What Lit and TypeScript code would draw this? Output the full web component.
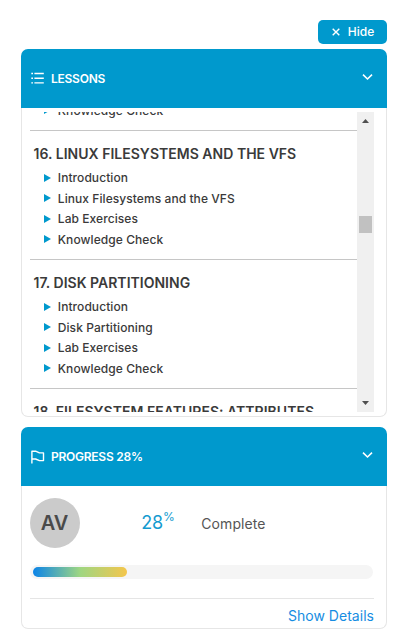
import { LitElement, html, css, svg } from "lit";
import { customElement, property } from "lit/decorators.js";

interface Lesson {
  title: string;
  items: string[];
}

const LESSONS: Lesson[] = [
  { title: "", items: ["Knowledge Check"] },
  {
    title: "16. LINUX FILESYSTEMS AND THE VFS",
    items: ["Introduction", "Linux Filesystems and the VFS", "Lab Exercises", "Knowledge Check"],
  },
  {
    title: "17. DISK PARTITIONING",
    items: ["Introduction", "Disk Partitioning", "Lab Exercises", "Knowledge Check"],
  },
  { title: "18. FILESYSTEM FEATURES: ATTRIBUTES", items: [] },
];

const listIcon = svg`<path d="M.3 1.5h1.7M.3 6.2h1.7M.3 10.9h1.7M3.4 1.5h9.4M3.4 6.2h9.4M3.4 10.9h9.4" stroke-width="1.4"/>`;
const flagIcon = svg`<path d="M.9 13.5V1.2H4.6L8.4 2.9h4.1V10.6H8.4L4.6 9H.9" stroke-width="1.4" stroke-linejoin="round"/>`;

@customElement("side-card")
export class SideCard extends LitElement {
  @property() heading = "";
  @property() icon: "list" | "flag" = "list";

  static styles = css`
    :host { display: flex; flex-direction: column; box-sizing: border-box; }
    .head {
      display: flex; align-items: center; height: 59px; flex: none; box-sizing: border-box;
      padding: 0 14px 0 10px; background: #0099cd; color: #fff; border-radius: 7px 7px 0 0;
    }
    .icon { width: 14px; height: 14px; margin-right: 6px; overflow: visible; }
    .list { height: 12px; margin-bottom: 1px; }
    .heading { flex: 1; font-size: 12px; font-weight: 600; letter-spacing: -0.25px; white-space: nowrap; }
    .chevron { width: 11px; height: 8px; margin-bottom: 4px; }
    .body {
      flex: 1; box-sizing: border-box; border: 1px solid #e6e6e6; border-top: 0;
      border-radius: 0 0 7px 7px; overflow: hidden; padding: 0 12px 0 8px;
    }
  `;

  render() {
    return html`
      <div class="head">
        <svg class="icon ${this.icon}" viewBox="0 0 14 ${this.icon === "list" ? 12 : 14}" fill="none" stroke="#fff">
          ${this.icon === "list" ? listIcon : flagIcon}
        </svg>
        <span class="heading">${this.heading}</span>
        <svg class="chevron" viewBox="0 0 11 8" fill="none" stroke="#fff" stroke-width="1.6">
          <path d="M1 1.7 5.5 6 10 1.7" />
        </svg>
      </div>
      <div class="body"><slot></slot></div>
    `;
  }
}

@customElement("app-root")
export class AppRoot extends LitElement {
  @property({ type: Number }) progress = 28;

  static styles = css`
    :host {
      display: flex; flex-direction: column; box-sizing: border-box; width: 408px; height: 637px;
      padding: 20px 21px 8px; background: #fff; color: #3a3a3a;
      font-family: Inter, "Liberation Sans", sans-serif; overflow: hidden;
    }
    .hide {
      align-self: flex-end; display: flex; align-items: center; justify-content: center; gap: 8px;
      width: 69px; height: 24px; border: 0; padding: 0 0 1px 1px; border-radius: 5px; background: #0099cd;
      color: #fff; font: 500 12px Inter, sans-serif;
    }
    .hide svg { width: 8px; height: 8px; }
    .lessons { height: 368px; margin-top: 5px; flex: none; }
    .progress { height: 202px; margin-top: 10px; flex: none; }
    .scroller { display: flex; height: 300px; margin-top: 4px; }
    .view { flex: 1; overflow: hidden; }
    .content { margin-top: -12px; }
    .section { height: 129px; box-sizing: border-box; padding-top: 13px; border-bottom: 1px solid #c6c6c6; }
    .tail { height: 31px; padding-top: 0; }
    .title {
      height: 20px; line-height: 20px; margin-bottom: 3.3px; padding-left: 3.5px;
      font-size: 14px; font-weight: 600; letter-spacing: 0.02px; white-space: nowrap;
    }
    .item {
      display: flex; align-items: center; height: 20.6px; padding-left: 14px; gap: 6.8px;
      font-size: 12px; font-weight: 500; letter-spacing: 0.07px; white-space: nowrap;
    }
    .item svg { width: 7px; height: 8px; }
    .bar { display: flex; flex-direction: column; align-items: center; width: 17px; background: #f0f0f0; }
    .arrow { width: 7px; height: 4px; padding: 7px 0 6px; flex: none; }
    .thumb { width: 13px; height: 17px; margin-top: 87px; background: #c1c1c1; }
    .bar .down { margin-top: auto; padding-bottom: 7px; }
    .summary { display: flex; align-items: center; height: 50px; margin-top: 12px; }
    .avatar {
      width: 50px; height: 50px; border-radius: 50%; background: #cbcbcb; color: #4a4a4a;
      font-size: 20px; font-weight: 600; line-height: 50px; text-align: center; text-indent: -1px;
    }
    .pct { display: flex; width: 60px; margin-left: 61.3px; color: #149bd0; font-size: 18px; line-height: 22px; letter-spacing: -0.2px; }
    .pct .sign { font-size: 12px; line-height: 10px; }
    .complete { font-size: 14px; letter-spacing: 0.08px; color: #555; }
    .track { box-sizing: border-box; height: 14px; padding: 2px 3px; margin: 17px 1px 0 0; border-radius: 7px; background: #f5f5f5; }
    .fill {
      height: 10px; border-radius: 5px;
      background: linear-gradient(90deg, #0b84e8, #9ed682 50%, #f4c64c);
    }
    .details { margin-top: 19px; border-top: 1px solid #e5e5e5; text-align: right; font-size: 14px; line-height: 34px; letter-spacing: 0.03px; color: #168de2; }
  `;

  private section(lesson: Lesson) {
    return html`
      <div class="section ${lesson.title ? "" : "tail"}">
        ${lesson.title ? html`<div class="title">${lesson.title}</div>` : ""}
        ${lesson.items.map(
          (name) => html`<div class="item">
            <svg viewBox="0 0 7 8"><path d="M0 0 7 4 0 8z" fill="#0099cd" /></svg>
            <span>${name}</span>
          </div>`
        )}
      </div>
    `;
  }

  render() {
    return html`
      <button class="hide">
        <svg viewBox="0 0 8 8" stroke="#fff" stroke-width="1.4"><path d="M.7.7l6.6 6.6M7.3.7.7 7.3" /></svg>
        <span>Hide</span>
      </button>
      <side-card class="lessons" heading="LESSONS" icon="list">
        <div class="scroller">
          <div class="view"><div class="content">${LESSONS.map((l) => this.section(l))}</div></div>
          <div class="bar">
            <svg class="arrow" viewBox="0 0 7 4"><path d="M0 4 3.5 0 7 4z" fill="#505050" /></svg>
            <div class="thumb"></div>
            <svg class="arrow down" viewBox="0 0 7 4"><path d="M0 0h7L3.5 4z" fill="#505050" /></svg>
          </div>
        </div>
      </side-card>
      <side-card class="progress" heading="PROGRESS ${this.progress}%" icon="flag">
        <div class="summary">
          <div class="avatar">AV</div>
          <div class="pct">${this.progress}<span class="sign">%</span></div>
          <div class="complete">Complete</div>
        </div>
        <div class="track"><div class="fill" style="width:${this.progress}%"></div></div>
        <div class="details">Show Details</div>
      </side-card>
    `;
  }
}
